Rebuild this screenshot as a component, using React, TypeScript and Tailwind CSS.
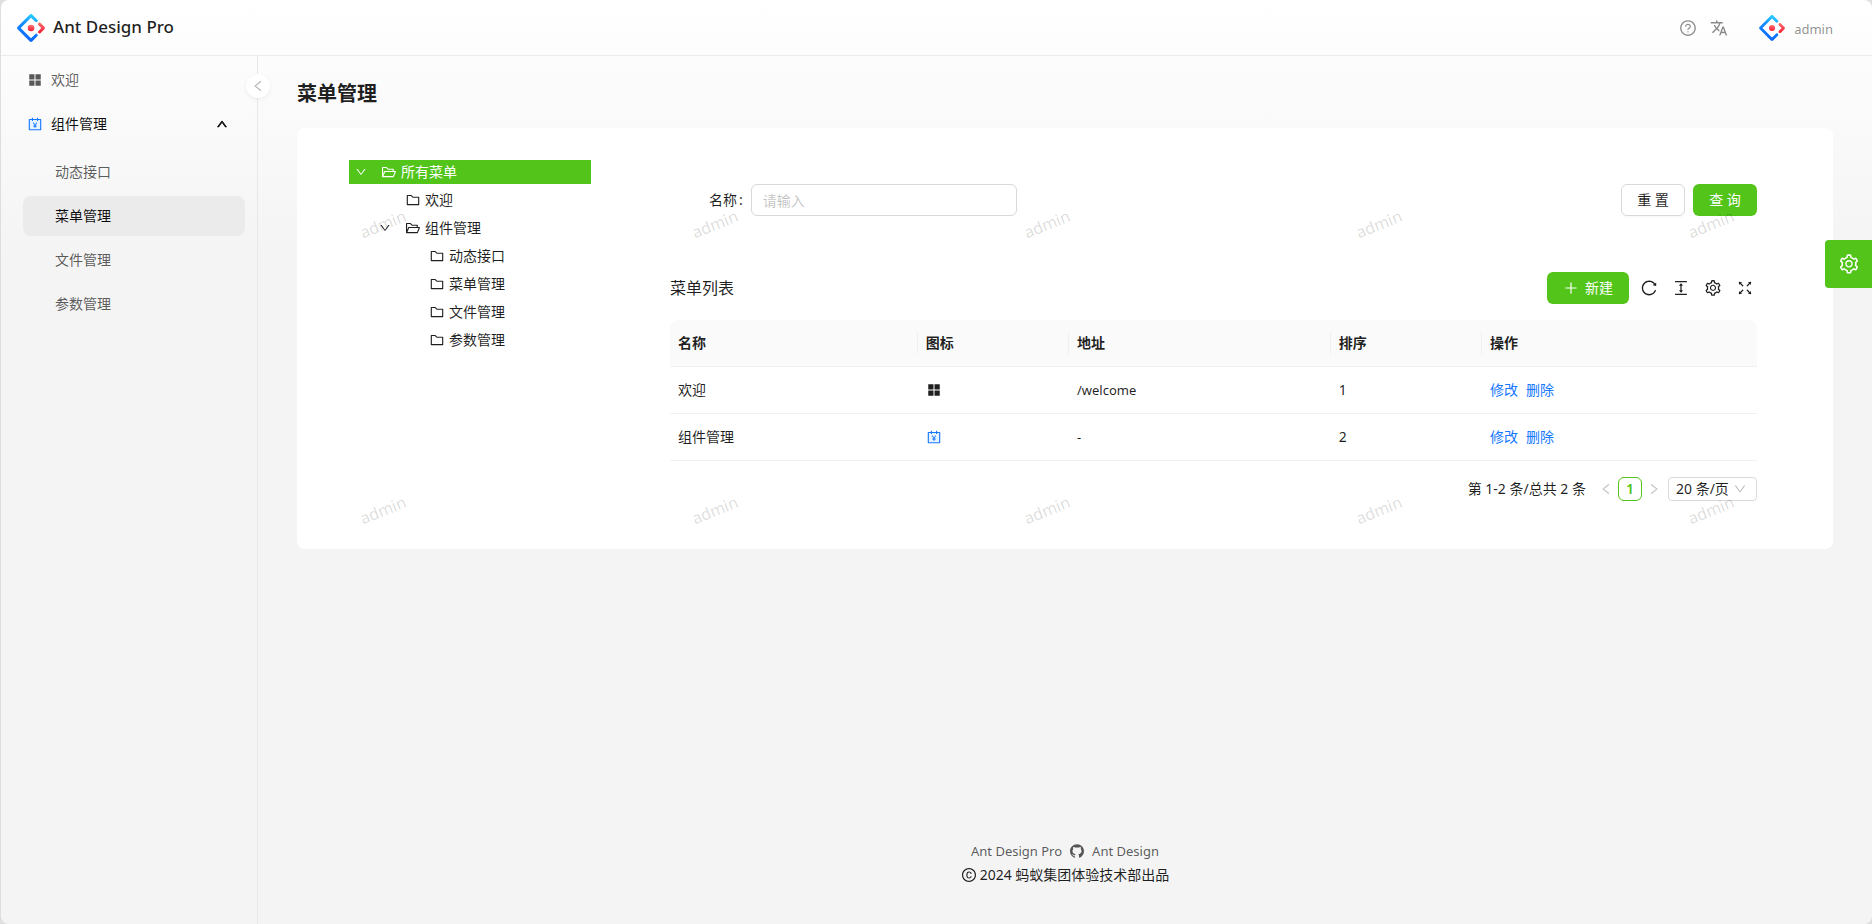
import {
  AiFillAppstore,
  AiOutlineColumnHeight,
  AiOutlineCopyrightCircle,
  AiOutlineDown,
  AiOutlineFolder,
  AiOutlineFolderOpen,
  AiOutlineFullscreen,
  AiOutlineGithub,
  AiOutlineLeft,
  AiOutlinePlus,
  AiOutlineQuestionCircle,
  AiOutlineReload,
  AiOutlineRight,
  AiOutlineSetting,
  AiOutlineUp,
} from "react-icons/ai";
import { MdTranslate } from "react-icons/md";

function Logo({ id, className }: { id: string; className: string }) {
  return (
    <svg viewBox="0 0 200 200" className={className} aria-hidden="true">
      <defs>
        <linearGradient id={id + "-sky"} x1="62%" y1="0%" x2="40%" y2="100%">
          <stop offset="0" stopColor="#29cdff" />
          <stop offset="0.38" stopColor="#148eff" />
          <stop offset="1" stopColor="#0a60ff" />
        </linearGradient>
        <linearGradient id={id + "-red"} x1="60%" y1="0%" x2="40%" y2="100%">
          <stop offset="0" stopColor="#fa816e" />
          <stop offset="0.41" stopColor="#f74a5c" />
          <stop offset="1" stopColor="#f51d2c" />
        </linearGradient>
      </defs>
      <path
        fill={"url(#" + id + "-sky)"}
        d="M91.588 4.177 4.18 91.513c-4.7 4.695-4.7 12.279 0 16.974l87.408 87.336c4.7 4.696 12.29 4.696 16.989 0l36.648-36.618c4.209-4.205 4.209-11.023 0-15.228-4.208-4.205-11.031-4.205-15.24 0l-27.783 27.76c-1.17 1.17-2.945 1.17-4.114 0L28.286 101.993c-1.17-1.168-1.17-2.942 0-4.11l69.802-69.745c1.169-1.169 2.944-1.169 4.114 0l27.783 27.76c4.209 4.205 11.032 4.205 15.24 0 4.209-4.205 4.209-11.022 0-15.227L108.58 4.056c-4.718-4.594-12.31-4.557-16.992.12Z"
      />
      <path
        fill={"url(#" + id + "-red)"}
        d="M153.686 135.855c4.208 4.205 11.031 4.205 15.24 0l27.034-27.012c4.7-4.696 4.7-12.28 0-16.974l-27.27-27.151c-4.218-4.2-11.043-4.194-15.254.014-4.209 4.205-4.209 11.022 0 15.227l18.418 18.403c1.17 1.169 1.17 2.943 0 4.111l-18.168 18.154c-4.209 4.205-4.209 11.023 0 15.228Z"
      />
      <circle cx="100.5" cy="100.4" r="23.6" fill={"url(#" + id + "-red)"} />
    </svg>
  );
}

function AccountBook({ className }: { className?: string }) {
  return (
    <svg viewBox="64 64 896 896" className={className} aria-hidden="true">
      <path
        fill="#e6f4ff"
        d="M712 304c0 4.4-3.6 8-8 8h-56c-4.4 0-8-3.600-8-8v-48H384v48c0 4.400-3.600 8-8 8h-56c-4.400 0-8-3.600-8-8v-48H184v584h656V256H712v48z"
      />
      <path
        fill="#1677ff"
        d="M880 184H712v-64c0-4.400-3.600-8-8-8h-56c-4.400 0-8 3.600-8 8v64H384v-64c0-4.400-3.600-8-8-8h-56c-4.400 0-8 3.600-8 8v64H144c-17.700 0-32 14.300-32 32v664c0 17.700 14.300 32 32 32h736c17.700 0 32-14.300 32-32V216c0-17.700-14.300-32-32-32zm-40 656H184V256h128v48c0 4.400 3.600 8 8 8h56c4.400 0 8-3.600 8-8v-48h256v48c0 4.400 3.600 8 8 8h56c4.400 0 8-3.600 8-8v-48h128v584z"
      />
      <path
        fill="#1677ff"
        d="M639.500 414h-45c-3 0-5.800 1.700-7.100 4.400L514 563.800h-2.800l-73.400-145.400a8 8 0 0 0-7.100-4.400h-46c-1.300 0-2.700.300-3.800 1-3.900 2.100-5.300 7-3.200 10.900l89.300 164h-48.600c-4.400 0-8 3.600-8 8v21.300c0 4.400 3.600 8 8 8h65.100v33.700h-65.100c-4.400 0-8 3.600-8 8v21.300c0 4.400 3.600 8 8 8h65.100V752c0 4.400 3.600 8 8 8h41.300c4.400 0 8-3.600 8-8v-53.800h65.400c4.400 0 8-3.600 8-8v-21.300c0-4.400-3.600-8-8-8h-65.400v-33.700h65.400c4.400 0 8-3.600 8-8v-21.300c0-4.400-3.600-8-8-8h-49.100l89.300-164.100c.6-1.200 1-2.500 1-3.800.1-4.400-3.400-8-7.900-8z"
      />
    </svg>
  );
}

const subMenu = ["动态接口", "菜单管理", "文件管理", "参数管理"];

function Sidebar() {
  return (
    <aside className="relative w-[257px] shrink-0 border-r border-[#e8e8e8] pt-1 pr-3 pl-[22px]">
      <nav className="flex flex-col gap-1 text-black/65">
        <a href="#welcome" className="flex h-10 items-center gap-2 pl-1">
          <span className="flex w-4 justify-center">
            <AiFillAppstore className="size-4" />
          </span>
          <span>欢迎</span>
        </a>
        <button type="button" className="flex h-10 w-full items-center gap-2 pr-[17px] pl-1 text-left text-black/95">
          <span className="flex w-4 justify-center">
            <AccountBook className="size-3.5" />
          </span>
          <span className="grow">组件管理</span>
          <AiOutlineUp className="size-3" strokeWidth="70" stroke="currentColor" />
        </button>
        <ul className="flex flex-col gap-1 pt-1">
          {subMenu.map((name) => (
            <li key={name}>
              <a
                href={"#" + name}
                className={
                  name === "菜单管理"
                    ? "flex h-10 items-center rounded-lg bg-[#ebebeb] pl-8 text-black/95"
                    : "flex h-10 items-center rounded-lg pl-8"
                }
              >
                {name}
              </a>
            </li>
          ))}
        </ul>
      </nav>
      <button
        type="button"
        aria-label="收起菜单"
        className="absolute top-[18px] -right-[13px] flex size-6 items-center justify-center rounded-full bg-white text-black/30 shadow-[0_2px_8px_-2px_rgba(0,0,0,0.05),0_1px_4px_-1px_rgba(25,15,15,0.07)]"
      >
        <AiOutlineLeft className="size-3.5" />
      </button>
    </aside>
  );
}

type Node = { name: string; depth: number; open?: boolean; root?: boolean };

const nodes: Node[] = [
  { name: "所有菜单", depth: 0, open: true, root: true },
  { name: "欢迎", depth: 1 },
  { name: "组件管理", depth: 1, open: true },
  { name: "动态接口", depth: 2 },
  { name: "菜单管理", depth: 2 },
  { name: "文件管理", depth: 2 },
  { name: "参数管理", depth: 2 },
];

function Tree() {
  return (
    <ul className="flex w-[242px] shrink-0 flex-col gap-1">
      {nodes.map((n) => (
        <li key={n.name + n.depth} className={n.root ? "flex h-6 bg-[#52c41a] text-white" : "flex h-6"}>
          {n.depth > 0 && <span className="w-6" />}
          {n.depth > 1 && <span className="w-6" />}
          <span className="mr-1 flex w-6 items-center justify-center">
            {n.open && <AiOutlineDown className="size-3" />}
          </span>
          <span className="flex w-6 items-center justify-center">
            {n.open ? <AiOutlineFolderOpen className="size-4" /> : <AiOutlineFolder className="size-4" />}
          </span>
          <span className="leading-6">{n.name}</span>
        </li>
      ))}
    </ul>
  );
}

const headers = ["名称", "图标", "地址", "排序", "操作"];

const rows = [
  { name: "欢迎", icon: <AiFillAppstore className="size-4" />, path: "/welcome", order: 1 },
  { name: "组件管理", icon: <AccountBook className="size-3.5" />, path: "-", order: 2 },
];

function MenuTable() {
  return (
    <table className="w-full table-fixed border-separate border-spacing-0 text-left">
      <colgroup>
        <col className="w-[22.8%]" />
        <col className="w-[13.9%]" />
        <col className="w-[24.1%]" />
        <col className="w-[13.9%]" />
        <col />
      </colgroup>
      <thead>
        <tr>
          {headers.map((h) => (
            <th
              key={h}
              className="relative h-[47px] border-b border-[#f0f0f0] bg-[#fafafa] px-2 font-semibold not-last:after:absolute not-last:after:top-3 not-last:after:right-0 not-last:after:h-[22px] not-last:after:w-px not-last:after:bg-[#f0f0f0] first:rounded-tl-lg last:rounded-tr-lg"
            >
              {h}
            </th>
          ))}
        </tr>
      </thead>
      <tbody>
        {rows.map((r) => (
          <tr key={r.name}>
            <td className="h-[47px] border-b border-[#f0f0f0] px-2">{r.name}</td>
            <td className="h-[47px] border-b border-[#f0f0f0] px-2">
              <span className="flex w-4 justify-center">{r.icon}</span>
            </td>
            <td className="h-[47px] border-b border-[#f0f0f0] px-2 text-[13px]">{r.path}</td>
            <td className="h-[47px] border-b border-[#f0f0f0] px-2">{r.order}</td>
            <td className="h-[47px] border-b border-[#f0f0f0] px-2">
              <div className="flex gap-2 text-[#1677ff]">
                <a href="#edit">修改</a>
                <a href="#delete">删除</a>
              </div>
            </td>
          </tr>
        ))}
      </tbody>
    </table>
  );
}

function Watermark() {
  return (
    <div
      aria-hidden="true"
      className="pointer-events-none absolute inset-0 grid grid-cols-[repeat(5,332px)] grid-rows-[286px_286px] overflow-hidden pt-[84px] pl-[62px]"
    >
      {Array.from({ length: 10 }, (_, i) => (
        <span key={i} className="w-12 -rotate-[22deg] self-start text-base leading-6 text-black/15">
          admin
        </span>
      ))}
    </div>
  );
}

function Content() {
  return (
    <div className="flex min-w-0 grow flex-col">
      <main className="px-[39px] pt-6">
        <h1 className="text-xl leading-7 font-semibold">菜单管理</h1>
        <section className="relative mt-5 flex gap-[79px] rounded-lg bg-white pt-8 pr-[76px] pb-12 pl-[52px]">
          <Tree />
          <div className="min-w-0 grow">
            <form className="flex items-center py-6 pl-[39px]">
              <label htmlFor="menu-name" className="mr-2">
                名称<span className="ml-0.5">:</span>
              </label>
              <input
                id="menu-name"
                placeholder="请输入"
                className="h-8 w-[266px] rounded-md border border-[#d9d9d9] bg-white px-[11px] placeholder:text-black/25"
              />
              <div className="ml-auto flex gap-2">
                <button
                  type="reset"
                  className="h-8 w-16 rounded-md border border-[#d9d9d9] bg-white shadow-[0_2px_0_rgba(0,0,0,0.02)]"
                >
                  重 置
                </button>
                <button type="button" className="h-8 w-16 rounded-md bg-[#52c41a] text-white">
                  查 询
                </button>
              </div>
            </form>
            <div className="flex items-center justify-between pt-8 pb-4">
              <h2 className="text-base leading-6">菜单列表</h2>
              <div className="flex items-center">
                <button
                  type="button"
                  className="mr-[11px] flex h-8 w-[82px] items-center justify-center gap-1.5 rounded-md bg-[#52c41a] text-white"
                >
                  <AiOutlinePlus className="size-4" />
                  新建
                </button>
                <div className="flex gap-3.5 pr-[3px]">
                  <button type="button" aria-label="刷新">
                    <AiOutlineReload className="size-[18px]" />
                  </button>
                  <button type="button" aria-label="密度">
                    <AiOutlineColumnHeight className="size-[18px]" />
                  </button>
                  <button type="button" aria-label="列设置">
                    <AiOutlineSetting className="size-[18px]" />
                  </button>
                  <button type="button" aria-label="全屏">
                    <AiOutlineFullscreen className="size-[18px]" />
                  </button>
                </div>
              </div>
            </div>
            <MenuTable />
            <div className="mt-4 flex h-6 items-center justify-end">
              <span className="mr-2">第 1-2 条/总共 2 条</span>
              <button type="button" aria-label="上一页" className="flex size-6 items-center justify-center text-black/25">
                <AiOutlineLeft className="size-3.5" />
              </button>
              <button
                type="button"
                className="size-6 rounded-md border border-[#52c41a] bg-white leading-[22px] font-semibold text-[#52c41a]"
              >
                1
              </button>
              <button type="button" aria-label="下一页" className="flex size-6 items-center justify-center text-black/25">
                <AiOutlineRight className="size-3.5" />
              </button>
              <div className="relative ml-0.5">
                <select
                  aria-label="每页条数"
                  className="h-6 w-[89px] appearance-none rounded-sm border border-[#d9d9d9] bg-white pl-[7px] leading-[22px]"
                >
                  <option>20 条/页</option>
                </select>
                <AiOutlineDown className="pointer-events-none absolute top-[5px] right-2.5 size-3.5 text-black/25" />
              </div>
            </div>
          </div>
          <Watermark />
        </section>
      </main>
      <footer className="mt-auto pb-[37px] text-center leading-6">
        <div className="flex items-center justify-center gap-[7px] text-[13px] leading-6 text-black/65">
          <a href="#pro">Ant Design Pro</a>
          <a href="#github" aria-label="GitHub">
            <AiOutlineGithub className="size-4" />
          </a>
          <a href="#ant">Ant Design</a>
        </div>
        <div className="flex items-center justify-center gap-[3px]">
          <AiOutlineCopyrightCircle className="size-4" />
          2024 蚂蚁集团体验技术部出品
        </div>
      </footer>
    </div>
  );
}

export default function App() {
  return (
    <div className="bg-[#dedede] font-['Noto_Sans','Noto_Sans_CJK_SC',sans-serif] text-sm text-black/88">
      <div className="flex min-h-screen flex-col rounded-lg border-l border-[#dedede] bg-linear-to-b from-white to-[#f4f4f4] to-28%">
        <header className="flex h-14 items-center border-b border-[#ebebeb] pr-[39px] pl-4">
          <Logo id="brand" className="size-7" />
          <span className="ml-2 text-[17px] font-medium">Ant Design Pro</span>
          <div className="ml-auto flex items-center text-black/45">
            <button type="button" aria-label="帮助">
              <AiOutlineQuestionCircle className="size-[18px]" />
            </button>
            <button type="button" aria-label="语言" className="ml-[13px]">
              <MdTranslate className="size-[18px]" />
            </button>
            <button type="button" className="ml-[31px] flex items-center gap-[9px] text-[13px]">
              <Logo id="avatar" className="size-[26px]" />
              <span className="pt-1">admin</span>
            </button>
          </div>
        </header>
        <div className="flex grow">
          <Sidebar />
          <Content />
        </div>
      </div>
      <button
        type="button"
        aria-label="主题设置"
        className="fixed top-60 right-0 flex h-12 w-[47px] items-center justify-center rounded-l-sm bg-[#52c41a] text-white"
      >
        <AiOutlineSetting className="size-[22px]" />
      </button>
    </div>
  );
}
